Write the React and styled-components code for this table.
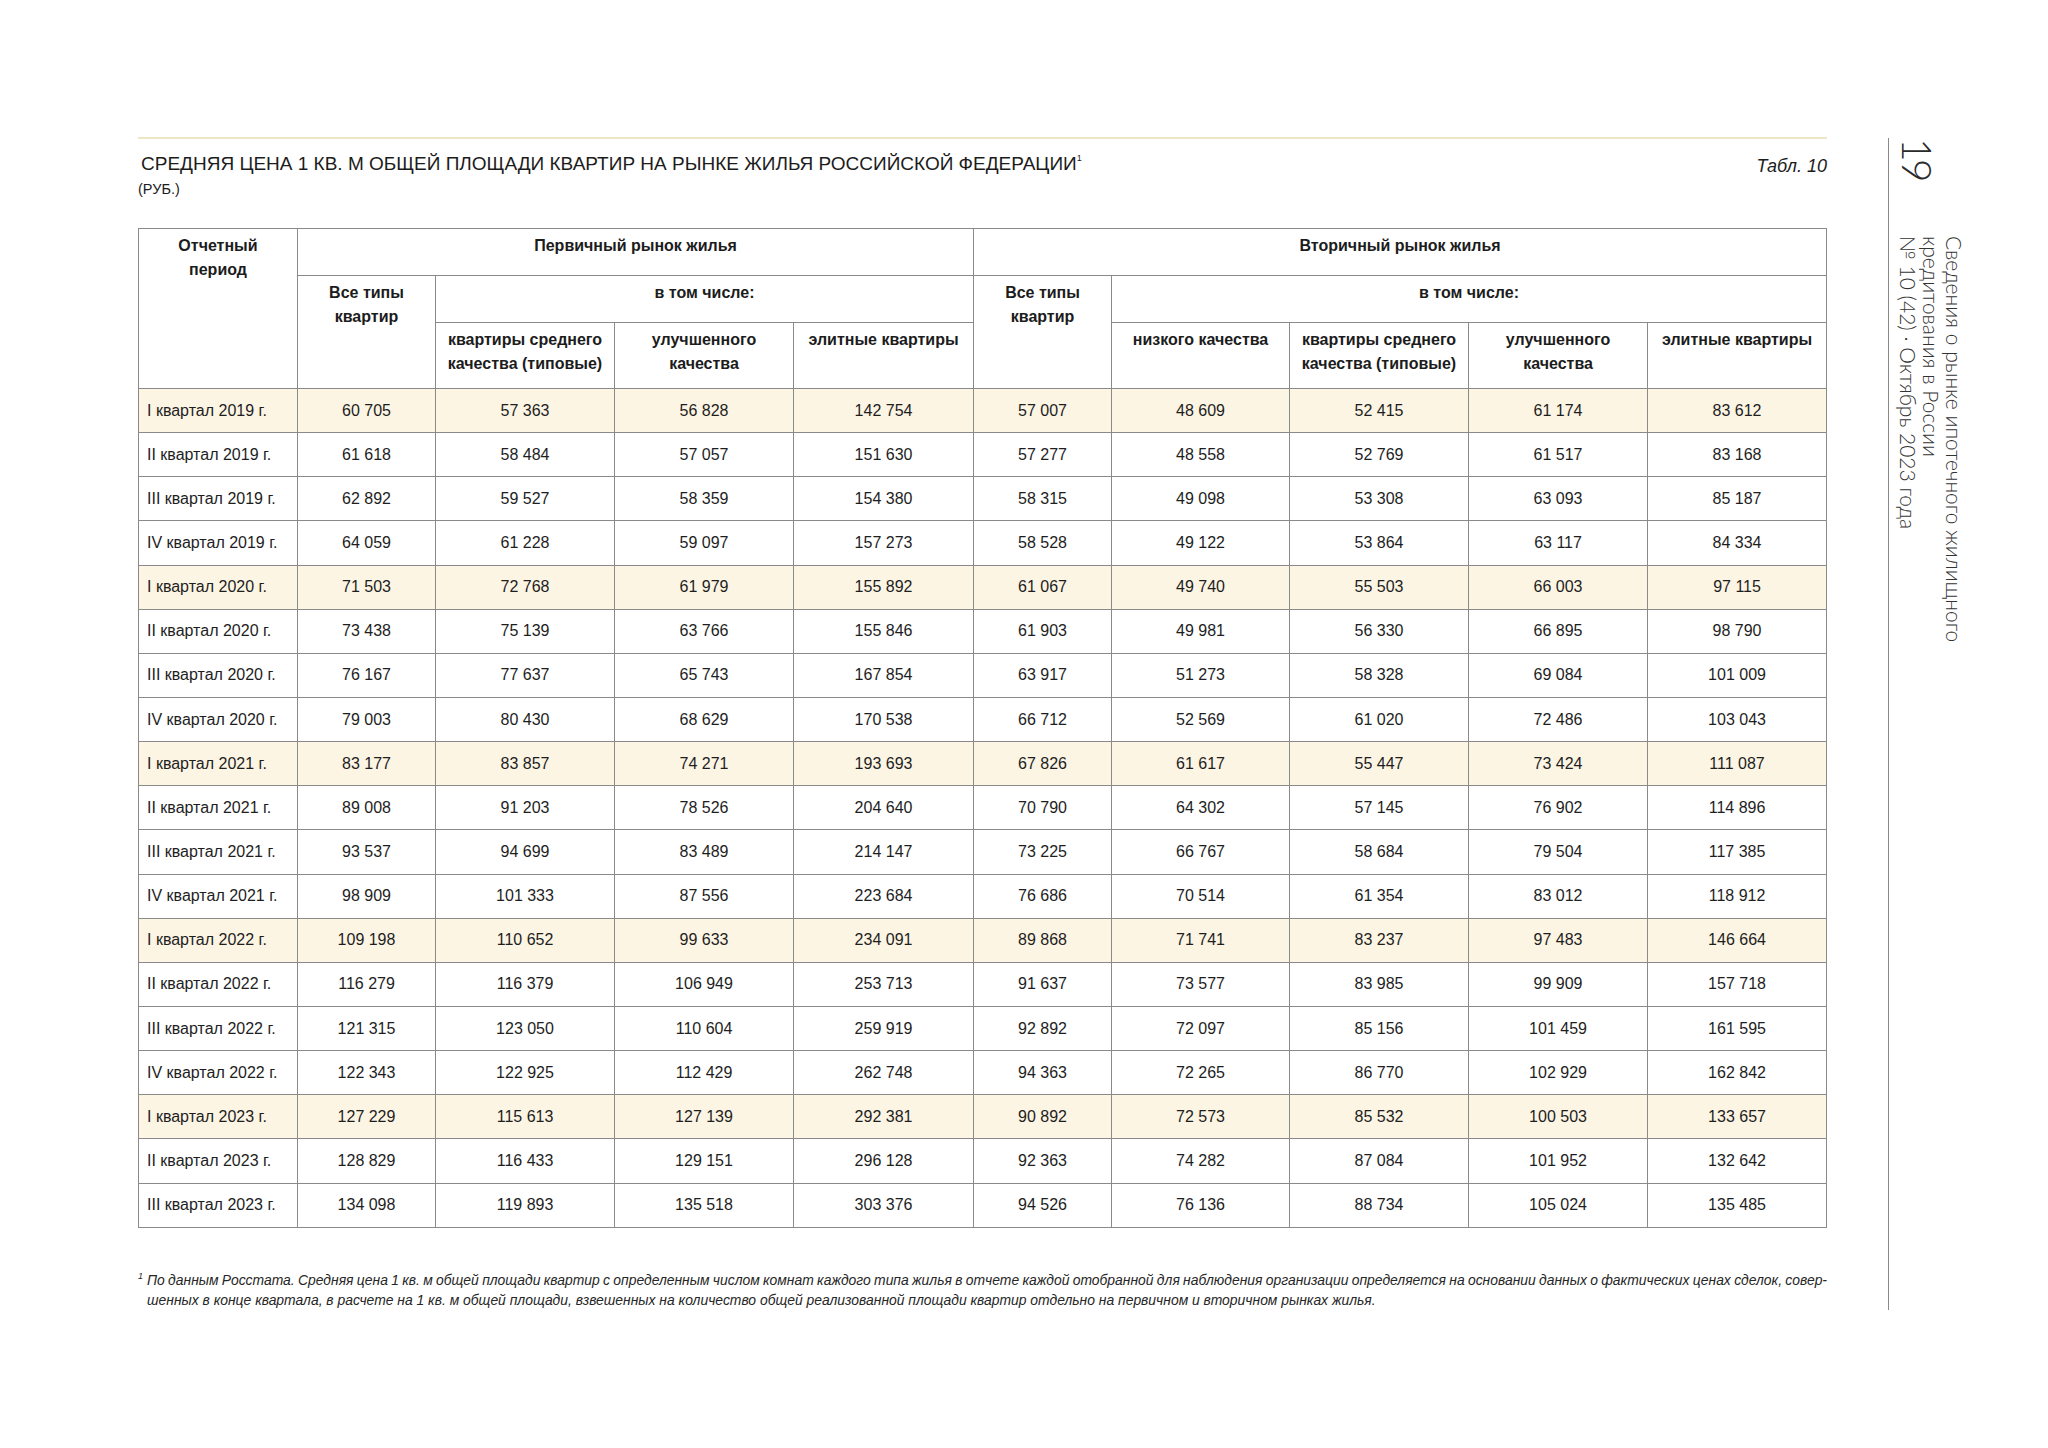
import React from 'react'
import styled, { createGlobalStyle } from 'styled-components'

const GlobalStyle = createGlobalStyle`
  html, body {
    margin: 0;
    padding: 0;
    background: #ffffff;
  }
  body {
    font-family: 'Liberation Sans', Arial, sans-serif;
    color: #1f1f1f;
  }
`;

const Page = styled.div`
  width: 2048px;
  height: 1448px;
  box-sizing: border-box;
  padding: 137px 0 0 138px;
  display: flex;
  align-items: flex-start;
`;

const Main = styled.div`
  width: 1689px;
  display: flex;
  flex-direction: column;
`;

const TopRule = styled.div`
  height: 2px;
  background: #efe6c6;
`;

const TitleRow = styled.div`
  display: flex;
  justify-content: space-between;
  align-items: flex-start;
  padding-top: 13px;
`;

const Title = styled.h1`
  margin: 0;
  padding-left: 3px;
  font-size: 19px;
  line-height: 23px;
  font-weight: 400;
  color: #1c1c1c;
  sup {
    font-size: 9px;
    vertical-align: top;
    line-height: 12px;
  }
`;

const Unit = styled.div`
  margin-top: 6px;
  font-size: 14.5px;
  line-height: 17px;
  color: #1c1c1c;
`;

const TableNo = styled.div`
  margin-top: 3px;
  font-size: 18px;
  line-height: 22px;
  font-style: italic;
  color: #1c1c1c;
`;

const Table = styled.table`
  margin-top: 30px;
  width: 1689px;
  border-collapse: collapse;
  table-layout: fixed;
  font-size: 16px;
  color: #1e1e1e;
`;

const HeadRow = styled.tr`
  height: ${({ h }) => h}px;
`;

const Th = styled.th`
  border: 1px solid #8a8a8a;
  vertical-align: top;
  text-align: center;
  padding: 5px 4px 0;
  font-size: 16px;
  line-height: 23.5px;
  font-weight: 700;
  color: #1c1c1c;
`;

const Row = styled.tr`
  height: 44.15px;
  background: ${({ hl }) => hl ? '#fdf5e4' : '#ffffff'};
`;

const Period = styled.td`
  border: 1px solid #8a8a8a;
  padding: 0 0 0 8px;
  text-align: left;
  vertical-align: middle;
  white-space: nowrap;
`;

const Cell = styled.td`
  border: 1px solid #8a8a8a;
  padding: 0;
  text-align: center;
  vertical-align: middle;
  white-space: nowrap;
`;

const Footnote = styled.div`
  margin-top: 42px;
  display: flex;
  font-style: italic;
  font-size: 13.9px;
  line-height: 20px;
  color: #262626;
`;

const FootMark = styled.span`
  width: 9px;
  flex: none;
  font-size: 9px;
  line-height: 12px;
`;

const FootText = styled.div`
  flex: 1;
  min-width: 0;
`;

const FootLine = styled.div`
  text-align: ${({ last }) => last ? 'left' : 'justify'};
  text-align-last: ${({ last }) => last ? 'left' : 'justify'};
  word-spacing: ${({ last }) => last ? '0' : '-1.2px'};
  white-space: nowrap;
`;

const Side = styled.aside`
  margin-left: 61px;
  margin-top: 1px;
  height: 1172px;
  border-left: 1px solid #8a8a8a;
  padding-left: 8px;
  display: flex;
  flex-direction: column;
  align-items: flex-start;
`;

const PageNum = styled.div`
  writing-mode: vertical-rl;
  text-orientation: sideways;
  font-family: Lato, 'Open Sans', sans-serif;
  font-weight: 300;
  font-size: 41px;
  line-height: 40px;
  letter-spacing: -3px;
  color: #2a2a2a;
`;

const SideText = styled.div`
  margin-top: 56px;
  writing-mode: vertical-rl;
  text-orientation: sideways;
  font-family: Lato, 'Open Sans', sans-serif;
  font-weight: 300;
  font-size: 21px;
  line-height: 23px;
  color: #333333;
`;

const cols = [159, 138, 179, 179, 180, 138, 178, 179, 179, 179];

const rows = [
  ['I квартал 2019 г.', '60 705', '57 363', '56 828', '142 754', '57 007', '48 609', '52 415', '61 174', '83 612'],
  ['II квартал 2019 г.', '61 618', '58 484', '57 057', '151 630', '57 277', '48 558', '52 769', '61 517', '83 168'],
  ['III квартал 2019 г.', '62 892', '59 527', '58 359', '154 380', '58 315', '49 098', '53 308', '63 093', '85 187'],
  ['IV квартал 2019 г.', '64 059', '61 228', '59 097', '157 273', '58 528', '49 122', '53 864', '63 117', '84 334'],
  ['I квартал 2020 г.', '71 503', '72 768', '61 979', '155 892', '61 067', '49 740', '55 503', '66 003', '97 115'],
  ['II квартал 2020 г.', '73 438', '75 139', '63 766', '155 846', '61 903', '49 981', '56 330', '66 895', '98 790'],
  ['III квартал 2020 г.', '76 167', '77 637', '65 743', '167 854', '63 917', '51 273', '58 328', '69 084', '101 009'],
  ['IV квартал 2020 г.', '79 003', '80 430', '68 629', '170 538', '66 712', '52 569', '61 020', '72 486', '103 043'],
  ['I квартал 2021 г.', '83 177', '83 857', '74 271', '193 693', '67 826', '61 617', '55 447', '73 424', '111 087'],
  ['II квартал 2021 г.', '89 008', '91 203', '78 526', '204 640', '70 790', '64 302', '57 145', '76 902', '114 896'],
  ['III квартал 2021 г.', '93 537', '94 699', '83 489', '214 147', '73 225', '66 767', '58 684', '79 504', '117 385'],
  ['IV квартал 2021 г.', '98 909', '101 333', '87 556', '223 684', '76 686', '70 514', '61 354', '83 012', '118 912'],
  ['I квартал 2022 г.', '109 198', '110 652', '99 633', '234 091', '89 868', '71 741', '83 237', '97 483', '146 664'],
  ['II квартал 2022 г.', '116 279', '116 379', '106 949', '253 713', '91 637', '73 577', '83 985', '99 909', '157 718'],
  ['III квартал 2022 г.', '121 315', '123 050', '110 604', '259 919', '92 892', '72 097', '85 156', '101 459', '161 595'],
  ['IV квартал 2022 г.', '122 343', '122 925', '112 429', '262 748', '94 363', '72 265', '86 770', '102 929', '162 842'],
  ['I квартал 2023 г.', '127 229', '115 613', '127 139', '292 381', '90 892', '72 573', '85 532', '100 503', '133 657'],
  ['II квартал 2023 г.', '128 829', '116 433', '129 151', '296 128', '92 363', '74 282', '87 084', '101 952', '132 642'],
  ['III квартал 2023 г.', '134 098', '119 893', '135 518', '303 376', '94 526', '76 136', '88 734', '105 024', '135 485'],
];

const App = () => {
  return (
    <Page>
      <GlobalStyle />
      <Main>
        <TopRule />
        <TitleRow>
          <div>
            <Title>
              СРЕДНЯЯ ЦЕНА 1 КВ. М ОБЩЕЙ ПЛОЩАДИ КВАРТИР НА РЫНКЕ ЖИЛЬЯ РОССИЙСКОЙ ФЕДЕРАЦИИ<sup>1</sup>
            </Title>
            <Unit>(РУБ.)</Unit>
          </div>
          <TableNo>Табл. 10</TableNo>
        </TitleRow>

        <Table>
          <colgroup>
            {cols.map((w, i) => <col key={i} style={{ width: w }} />)}
          </colgroup>
          <thead>
            <HeadRow h={47}>
              <Th rowSpan={3}>Отчетный<br />период</Th>
              <Th colSpan={4}>Первичный рынок жилья</Th>
              <Th colSpan={5}>Вторичный рынок жилья</Th>
            </HeadRow>
            <HeadRow h={47}>
              <Th rowSpan={2}>Все типы<br />квартир</Th>
              <Th colSpan={3}>в том числе:</Th>
              <Th rowSpan={2}>Все типы<br />квартир</Th>
              <Th colSpan={4}>в том числе:</Th>
            </HeadRow>
            <HeadRow h={66}>
              <Th>квартиры среднего<br />качества (типовые)</Th>
              <Th>улучшенного<br />качества</Th>
              <Th>элитные квартиры</Th>
              <Th>низкого качества</Th>
              <Th>квартиры среднего<br />качества (типовые)</Th>
              <Th>улучшенного<br />качества</Th>
              <Th>элитные квартиры</Th>
            </HeadRow>
          </thead>
          <tbody>
            {rows.map((r, i) => (
              <Row key={r[0]} hl={i % 4 === 0}>
                <Period>{r[0]}</Period>
                {r.slice(1).map((v, j) => <Cell key={j}>{v}</Cell>)}
              </Row>
            ))}
          </tbody>
        </Table>

        <Footnote>
          <FootMark>1</FootMark>
          <FootText>
            <FootLine>
              По данным Росстата. Средняя цена 1 кв. м общей площади квартир с определенным числом комнат каждого типа жилья в отчете каждой отобранной для наблюдения организации определяется на основании данных о фактических ценах сделок, совер-
            </FootLine>
            <FootLine last>
              шенных в конце квартала, в расчете на 1 кв. м общей площади, взвешенных на количество общей реализованной площади квартир отдельно на первичном и вторичном рынках жилья.
            </FootLine>
          </FootText>
        </Footnote>
      </Main>

      <Side>
        <PageNum>19</PageNum>
        <SideText>
          Сведения о рынке ипотечного жилищного<br />
          кредитования в России<br />
          № 10 (42) · Октябрь 2023 года
        </SideText>
      </Side>
    </Page>
  )
}

export default App;
